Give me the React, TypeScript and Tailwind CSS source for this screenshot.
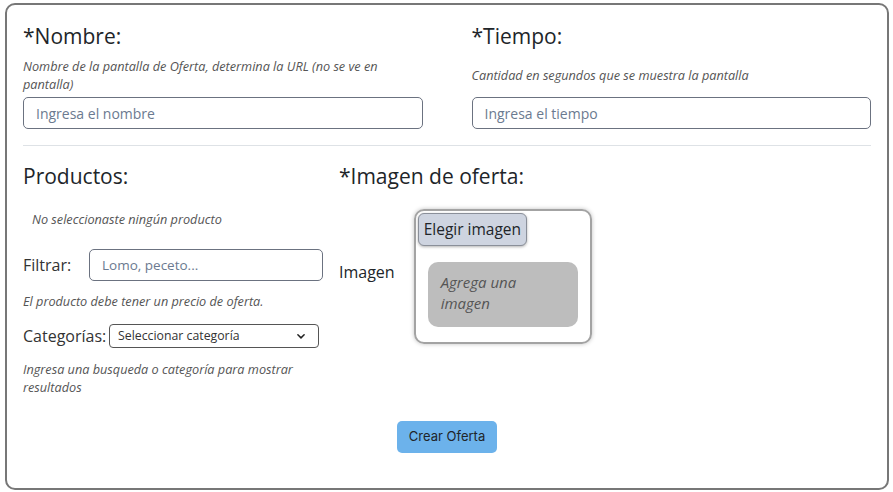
import React from 'react';

const font = { fontFamily: '"Open Sans", "Noto Sans", sans-serif' };

function Field({ title, hint, placeholder }: { title: string; hint: string; placeholder: string }) {
  return (
    <div className="flex flex-col">
      <h2 className="text-[21px] leading-[29px] text-[#212529]">{title}</h2>
      <div className="h-[42px] mt-[3px] flex items-center">
        <p className="text-[12.7px] leading-[18px] italic text-[#555]">{hint}</p>
      </div>
      <input
        className="mt-[1px] h-[32px] w-full rounded-[5px] border border-[#6b7280] px-3 text-[14px] text-[#212529] placeholder:text-[#6b7a90] outline-none"
        placeholder={placeholder}
      />
    </div>
  );
}

function Productos() {
  return (
    <div className="flex flex-col">
      <h2 className="text-[21px] leading-[29px] text-[#212529]">Productos:</h2>
      <p className="mt-[19px] pl-[9px] text-[12.7px] leading-[18px] italic text-[#555]">
        No seleccionaste ningún producto
      </p>
      <div className="mt-[21px] flex items-center">
        <label className="w-[66px] text-[16px] text-[#333]">Filtrar:</label>
        <input
          className="h-[32px] flex-1 rounded-[5px] border border-[#6b7280] px-3 text-[13.5px] placeholder:text-[#6b7a90] outline-none"
          placeholder="Lomo, peceto..."
        />
      </div>
      <p className="mt-[11px] text-[12.7px] leading-[18px] italic text-[#555]">
        El producto debe tener un precio de oferta.
      </p>
      <div className="mt-[9px] h-[34px] flex items-center">
        <label className="w-[86px] whitespace-nowrap text-[16px] text-[#333]">Categorías:</label>
        <div className="h-[24px] w-[210px] rounded-[4px] border border-[#555] pl-[8px] pr-3 flex items-center justify-between">
          <span className="text-[12.3px] text-[#333]">Seleccionar categoría</span>
          <svg width="10" height="10" viewBox="0 0 16 16" fill="none">
            <path d="M3 6l5 5 5-5" stroke="#222" strokeWidth="2.4" strokeLinecap="round" strokeLinejoin="round" />
          </svg>
        </div>
      </div>
      <p className="mt-[7px] text-[12.7px] leading-[18px] italic text-[#555]">
        Ingresa una busqueda o categoría para mostrar resultados
      </p>
    </div>
  );
}

function ImagenOferta() {
  return (
    <div className="flex flex-col">
      <h2 className="text-[21px] leading-[29px] text-[#212529]">*Imagen de oferta:</h2>
      <div className="mt-[18px] flex items-center gap-[19px]">
        <span className="-mt-[10px] text-[16px] text-[#212529]">Imagen</span>
        <div className="w-[178px] h-[135px] rounded-[10px] border-2 border-[#a3a3a3] shadow-[0_0_4px_rgba(0,0,0,0.25)] p-[2px] flex flex-col">
          <button className="self-start h-[33px] px-[5px] rounded-[6px] border border-[#8a8f99] bg-[#ced4e0] shadow-[0_1px_3px_rgba(0,0,0,0.3)] text-[15.5px] text-[#212529]">
            Elegir imagen
          </button>
          <div className="mt-[16px] mx-[10px] h-[65px] rounded-[10px] bg-[#bdbdbd] px-[13px] pt-[10px]">
            <p className="w-[100px] text-[15px] leading-[21px] italic text-[#555]">Agrega una imagen</p>
          </div>
        </div>
      </div>
    </div>
  );
}

export default function App() {
  return (
    <div className="bg-white w-[893px] h-[492px] pt-[3px] pl-[5px]" style={font}>
      <div className="w-[884px] h-[487px] rounded-[10px] border-2 border-[#777] flex flex-col">
        <div className="grid grid-cols-2 gap-x-[49px] px-4 pt-[17px]">
          <Field
            title="*Nombre:"
            hint="Nombre de la pantalla de Oferta, determina la URL (no se ve en pantalla)"
            placeholder="Ingresa el nombre"
          />
          <Field
            title="*Tiempo:"
            hint="Cantidad en segundos que se muestra la pantalla"
            placeholder="Ingresa el tiempo"
          />
        </div>
        <hr className="mx-4 mt-4 border-t border-[#dee2e6]" />
        <div className="grid grid-cols-[300px_1fr] gap-x-4 px-4 pt-[16px]">
          <Productos />
          <ImagenOferta />
        </div>
        <div className="flex justify-center mt-[25px]">
          <button className="h-[32px] px-3 rounded-[5px] bg-[#6cb2eb] text-[13px] text-[#212529]" style={{ fontFamily: 'Inter, sans-serif' }}>
            Crear Oferta
          </button>
        </div>
      </div>
    </div>
  );
}
